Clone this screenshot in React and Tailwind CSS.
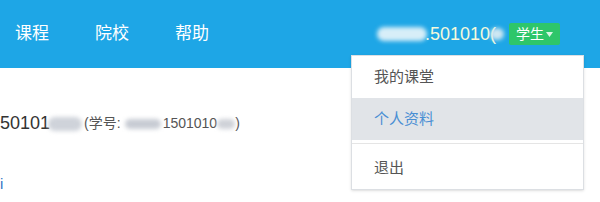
import React from 'react';

function Blur({ className }) {
  // 打码区域
  return <span className={`inline-block rounded-full blur-[2px] ${className}`} />;
}

function App() {
  const font = { fontFamily: '"Liberation Sans", "Noto Sans CJK SC", sans-serif' };

  return (
    <div className="relative h-[202px] w-[600px] overflow-hidden bg-white" style={font}>
      <header className="flex h-[68px] items-center justify-between bg-[#1ea6e6] pl-[15px] pr-[40px]">
        <nav className="flex items-center gap-[46px] text-[17px] text-white">
          <a>课程</a>
          <a>院校</a>
          <a>帮助</a>
        </nav>
        <div className="flex items-center gap-[5px]">
          <span className="flex items-center text-[18px] text-[#f4f9dc]">
            <Blur className="h-[14px] w-[50px] bg-[#d7eef8]" />
            <span className="-ml-[2px]">.501010(</span>
            <Blur className="-ml-[6px] h-[12px] w-[14px] bg-[#cfe7f2]" />
          </span>
          <span className="flex h-[22px] items-center gap-[2px] rounded-[2px] bg-[#2ec66a] px-[7px] text-[14px] text-white">
            学生
            <svg width="7" height="5" viewBox="0 0 7 5" className="mt-[1px]">
              <path d="M0 0h7L3.5 5z" fill="#d8f5e3" />
            </svg>
          </span>
        </div>
      </header>

      <main className="pt-[42px]">
        <div className="flex items-center text-[#333]">
          <span className="text-[18px]">50101</span>
          <Blur className="-ml-[2px] h-[14px] w-[34px] bg-[#cfd3da]" />
          <span className="ml-[2px] flex items-center text-[14px] text-[#555]">
            (学号:
            <Blur className="ml-[4px] h-[10px] w-[36px] bg-[#c8ccd4]" />
            <span className="ml-[2px]">1501010</span>
            <Blur className="h-[10px] w-[18px] bg-[#cfd2d8]" />
            )
          </span>
        </div>
        <div className="mt-[36px] text-[15px] text-[#3277c5]">i</div>
      </main>

      <div className="absolute left-[351px] top-[55px] w-[233px] border border-[#dcdfe3] bg-white text-[15px] text-[#555] shadow-sm">
        <div className="flex h-[42px] items-center pl-[22px]">我的课堂</div>
        <div className="flex h-[42px] items-center bg-[#e1e4e8] pl-[22px] text-[#4a8fd4]">个人资料</div>
        <div className="my-[3px] h-px bg-[#e5e5e5]" />
        <div className="flex h-[42px] items-center pl-[22px]">退出</div>
      </div>
    </div>
  );
}

export default App;
